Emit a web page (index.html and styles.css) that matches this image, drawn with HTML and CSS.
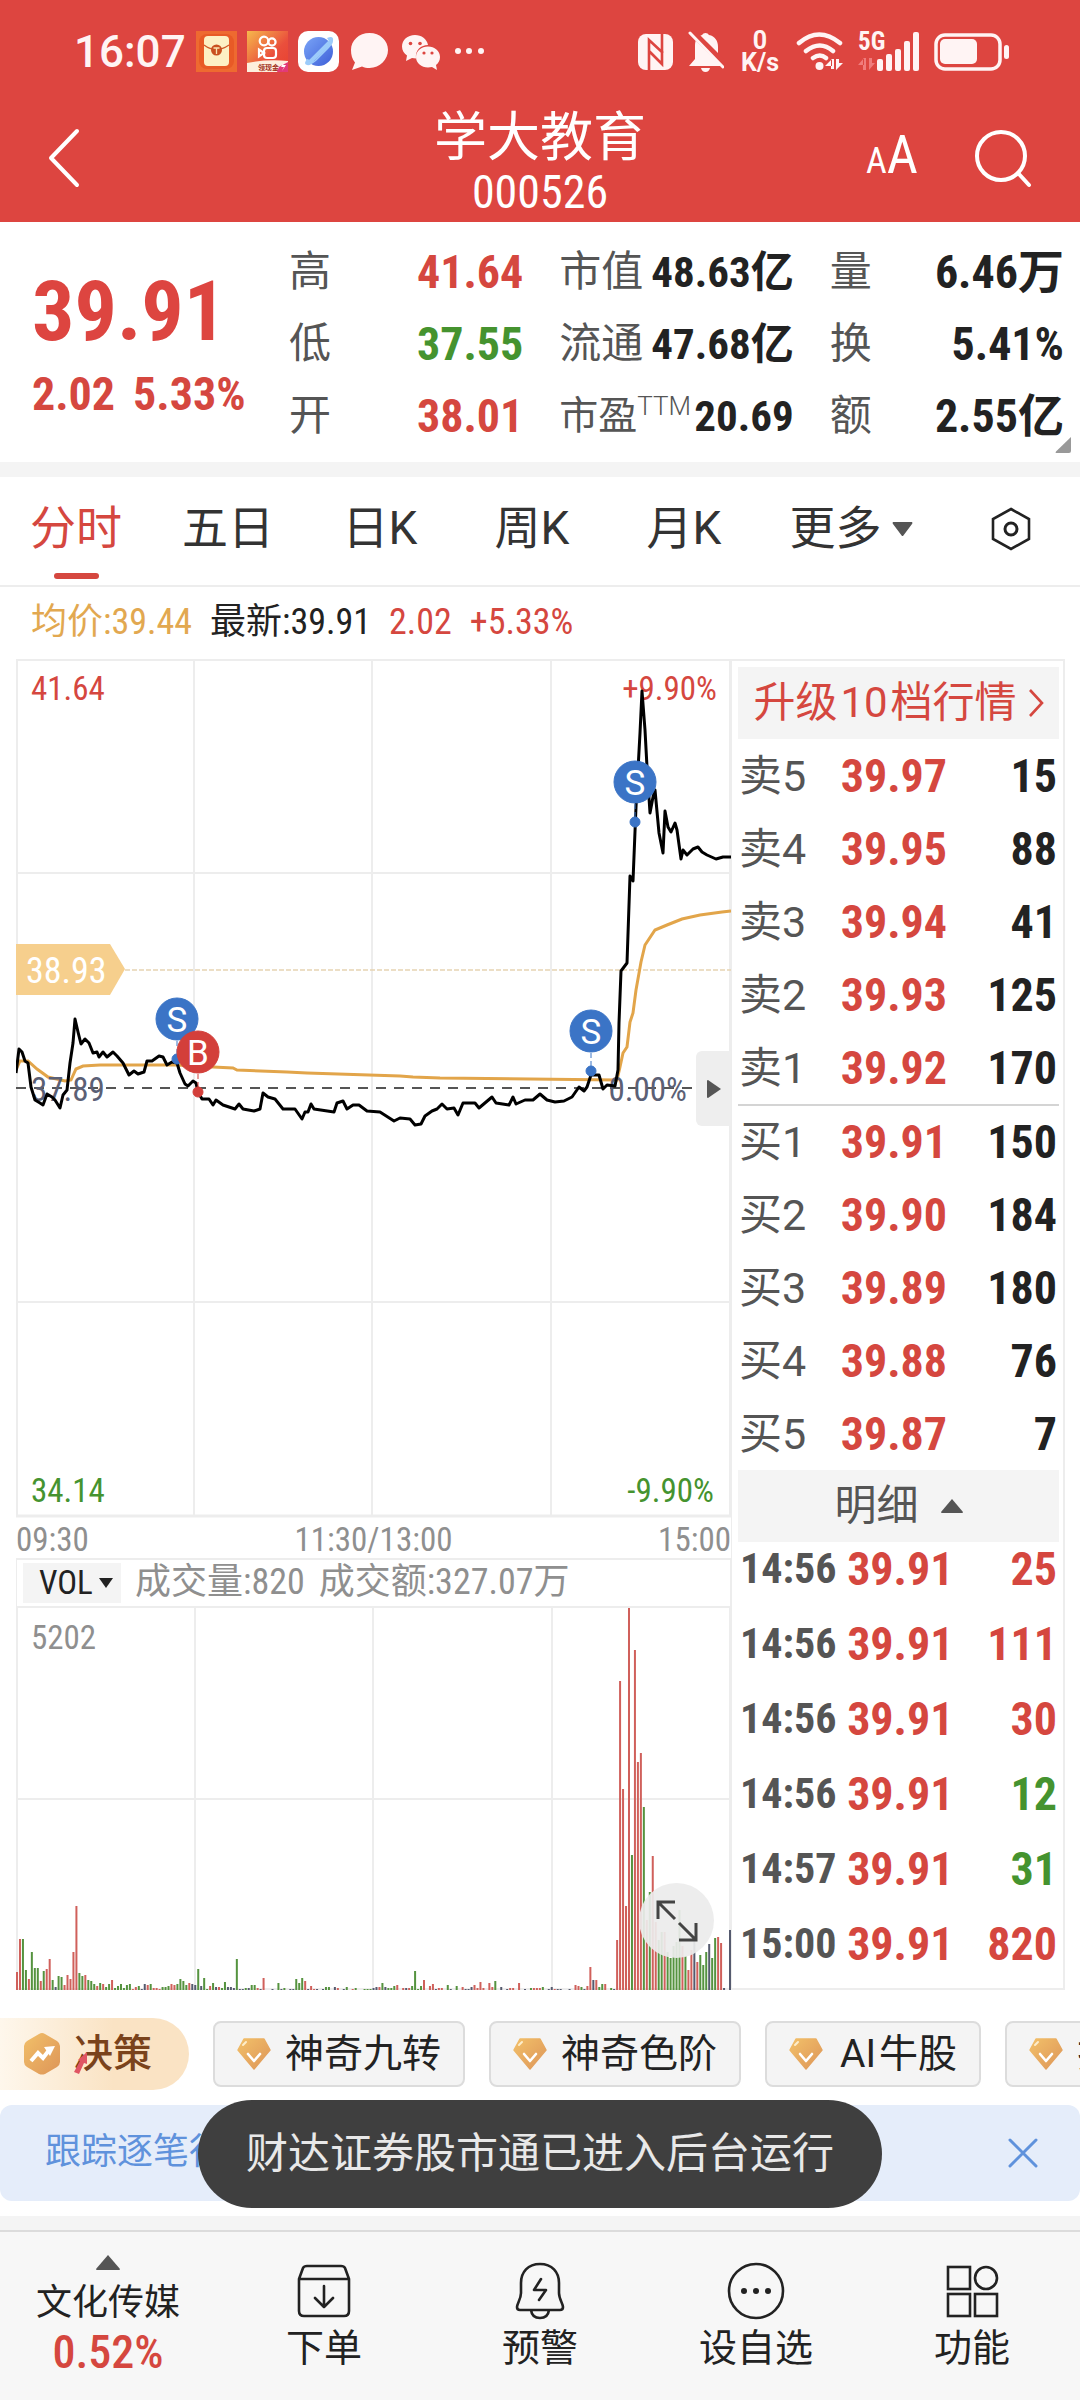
FILE: index.html
```html
<!DOCTYPE html>
<html lang="zh-CN">
<head>
    <meta charset="UTF-8">
    <meta name="viewport" content="width=device-width, initial-scale=1.0">
    <title>学大教育 000526</title>
    <link rel="stylesheet" href="styles.css">
</head>
<body>
    <!-- Shared icons -->
    <svg class="defs" aria-hidden="true">
        <defs>
            <linearGradient id="gold" x1="0" y1="0" x2="1" y2="1">
                <stop offset="0" stop-color="#f2c069"/>
                <stop offset="1" stop-color="#dd9558"/>
            </linearGradient>
            <linearGradient id="pay" x1="0" y1="0" x2="1" y2="1">
                <stop offset="0" stop-color="#f6b94c"/>
                <stop offset="0.6" stop-color="#ea4f3c"/>
                <stop offset="1" stop-color="#e8402f"/>
            </linearGradient>
            <linearGradient id="planet" x1="0" y1="0" x2="1" y2="1">
                <stop offset="0" stop-color="#7aa4f7"/>
                <stop offset="1" stop-color="#3d5fd8"/>
            </linearGradient>
            <symbol id="gem" viewBox="0 0 34 32">
                <path d="M7 1h20l6 11-16 19L1 12z" fill="url(#gold)" stroke="url(#gold)" stroke-width="1.5" stroke-linejoin="round"/>
                <path d="M11 16l6 7 6-7" fill="none" stroke="#fff" stroke-width="2.6" stroke-linecap="round" stroke-linejoin="round"/>
                <path d="M6 7l3-3" stroke="#fdeecb" stroke-width="2" stroke-linecap="round"/>
            </symbol>
        </defs>
    </svg>

    <header class="top">
        <div class="status-bar">
            <div class="status-left">
                <span class="clock">16:07</span>
                <svg width="41" height="41" viewBox="0 0 41 41">
                    <rect width="41" height="41" fill="#ee6a30"/>
                    <rect x="3" y="3" width="35" height="35" rx="8" fill="#e85a26"/>
                    <rect x="8" y="5" width="25" height="30" rx="4" fill="#fdf0c4"/>
                    <path d="M8 14q12 9 25 0" fill="none" stroke="#cf5a28" stroke-width="1.4"/>
                    <circle cx="20.5" cy="19" r="5.5" fill="#c9501f"/>
                    <path d="M17.5 17h6M20.5 17v6" stroke="#fbe3b0" stroke-width="1.3"/>
                </svg>
                <svg width="41" height="41" viewBox="0 0 41 41">
                    <rect width="41" height="41" fill="url(#pay)"/>
                    <g fill="none" stroke="#fff" stroke-width="2.2">
                        <circle cx="17" cy="10" r="4.3"/>
                        <circle cx="25" cy="11" r="3.6"/>
                        <rect x="17" y="17" width="12" height="10" rx="3"/>
                        <path d="M17 22l-5-3.5v7z"/>
                    </g>
                    <path d="M0 32q20-4 41-2v11H0z" fill="#fdeedd"/>
                    <text class="app-tag" x="11" y="39">领现金</text>
                    <path d="M32 36l9-5v10h-11z" fill="#e23a78"/>
                    <path d="M37 31l-3 5h3l-2 4 4-6h-3z" fill="#fff"/>
                </svg>
                <svg width="41" height="41" viewBox="0 0 41 41">
                    <rect width="41" height="41" rx="10" fill="#fff"/>
                    <circle cx="20.5" cy="20.5" r="14.5" fill="url(#planet)"/>
                    <path d="M9 34q-4-1 0-6l3 1q-2 3 4 1L32 13q2-4-1-3l-2-3q7-3 6 3 0 3-4 7L18 30q-6 5-9 4z" fill="#9ccbfa"/>
                    <path d="M13 30L32 11" stroke="#9ccbfa" stroke-width="4" stroke-linecap="round"/>
                </svg>
                <svg width="41" height="41" viewBox="0 0 41 41" fill="#fff4f4">
                    <path d="M20.5 2C31 2 39 9.5 39 19S31 37 20.5 37c-3 0-5-.5-7.5-1.500L3 39l3-7.500C3 28 2 24 2 19 2 9.5 10 2 20.5 2z"/>
                </svg>
                <svg width="41" height="41" viewBox="0 0 41 41" fill="#fff4f4">
                    <path d="M15 4C7.5 4 2 9 2 15.5c0 4 2 7 5 9L6 30l6-3 4 .5C15 19 21 14 28 14 27 8 21.5 4 15 4z"/>
                    <path d="M28 15.5c-6.5 0-12 4.5-12 10.500s5.500 10.500 12 10.500l4-.5 5 3-1-5c2.500-2 4-4.500 4-8 0-6-5.500-10.500-12-10.500z"/>
                    <g fill="#dd4540"><circle cx="10.5" cy="12.5" r="1.8"/><circle cx="20" cy="12.5" r="1.8"/><circle cx="24" cy="22" r="1.6"/><circle cx="32" cy="22" r="1.6"/></g>
                </svg>
                <svg width="41" height="41" viewBox="0 0 41 41" fill="#fff4f4">
                    <circle cx="7" cy="20" r="3"/><circle cx="18" cy="20" r="3"/><circle cx="30" cy="20" r="3"/>
                </svg>
            </div>
            <div class="status-right">
                <svg width="36" height="36" viewBox="0 0 36 36">
                    <rect width="35" height="36" rx="8" fill="#fff4f4"/>
                    <path d="M11 38V6l14 13M24 -2v32L11 17" fill="none" stroke="#dd4540" stroke-width="2.6"/>
                </svg>
                <svg width="36" height="42" viewBox="0 0 36 42">
                    <path d="M14 4a4 4 0 0 1 7 0c6 1 9 6 9 12v9l5 10H1l6-7V15c0-6 2-9 7-11z" fill="#fff4f4"/>
                    <path d="M13 37h9q-1 4-4.500 4T13 37z" fill="#fff4f4"/>
                    <path d="M3 0l34 34" stroke="#dd4540" stroke-width="7"/>
                    <path d="M2 2l33 34" stroke="#fff4f4" stroke-width="3" stroke-linecap="round"/>
                </svg>
                <span class="net-speed"><b>0</b><b>K/s</b></span>
                <svg width="48" height="40" viewBox="0 0 48 40">
                    <g fill="none" stroke="#fff4f4" stroke-width="4.5" stroke-linecap="round">
                        <path d="M3 11q20-17 41 0M10 19q14-11 27 0M17 26q7-5 13 0"/>
                    </g>
                    <circle cx="23.5" cy="34" r="4" fill="#fff4f4"/>
                    <path d="M35 27v10h3V27zM29 34l7-7v7zM40 27v11l7-7h-4v-4z" fill="#fff4f4"/>
                </svg>
                <div class="signal">
                    <b>5G</b>
                    <svg width="62" height="40" viewBox="0 0 62 40">
                        <path d="M5 26v12h3V26zM0 33l6-7v7zM11 26v12l6-7h-3v-5z" fill="#f07c7c"/>
                        <g fill="#fff4f4">
                            <rect x="19" y="27" width="6" height="12" rx="2"/>
                            <rect x="28" y="22" width="6" height="17" rx="2"/>
                            <rect x="37" y="17" width="6" height="22" rx="2"/>
                            <rect x="46" y="9" width="6" height="30" rx="2"/>
                            <rect x="55" y="0" width="6" height="39" rx="2"/>
                        </g>
                    </svg>
                </div>
                <svg width="76" height="38" viewBox="0 0 76 38">
                    <rect x="2" y="2" width="64" height="34" rx="9" fill="none" stroke="#fff4f4" stroke-width="3.5"/>
                    <rect x="6" y="6" width="37" height="25" rx="5" fill="#fff4f4"/>
                    <rect x="70" y="12" width="5" height="14" rx="2.5" fill="#fff4f4"/>
                </svg>
            </div>
        </div>
        <div class="title-bar">
            <button class="icon-btn" aria-label="返回">
                <svg width="32" height="60" viewBox="0 0 32 60"><path d="M29 3L3 30l26 27" fill="none" stroke="#fff" stroke-width="4" stroke-linecap="round" stroke-linejoin="round"/></svg>
            </button>
            <div class="title">
                <h1>学大教育</h1>
                <p>000526</p>
            </div>
            <div class="title-actions">
                <button class="font-btn" aria-label="字体大小"><small>A</small>A</button>
                <button class="icon-btn" aria-label="搜索">
                    <svg width="58" height="60" viewBox="0 0 58 60" fill="none" stroke="#fff" stroke-width="4" stroke-linecap="round"><circle cx="27" cy="28" r="24"/><path d="M44 45l11 12"/></svg>
                </button>
            </div>
        </div>
    </header>

    <section class="quote">
        <div class="quote-main">
            <div class="price">39.91</div>
            <div class="change"><span>2.02</span><span>5.33%</span></div>
        </div>
        <dl class="stats">
            <div><dt>高</dt><dd class="up">41.64</dd></div>
            <div class="tight"><dt>市值</dt><dd>48.63亿</dd></div>
            <div><dt>量</dt><dd>6.46万</dd></div>
            <div><dt>低</dt><dd class="down">37.55</dd></div>
            <div class="tight"><dt>流通</dt><dd>47.68亿</dd></div>
            <div><dt>换</dt><dd>5.41%</dd></div>
            <div><dt>开</dt><dd class="up">38.01</dd></div>
            <div class="tight"><dt>市盈<sup>TTM</sup></dt><dd>20.69</dd></div>
            <div><dt>额</dt><dd>2.55亿</dd></div>
        </dl>
        <svg class="corner" width="16" height="16" viewBox="0 0 16 16"><path d="M16 0v14q0 2-2 2H1q-1 0 0-1.500z" fill="#999"/></svg>
    </section>

    <nav class="tabs">
        <button class="tab active">分时</button>
        <button class="tab">五日</button>
        <button class="tab">日K</button>
        <button class="tab">周K</button>
        <button class="tab">月K</button>
        <button class="tab" aria-haspopup="true">更多<svg width="21" height="15" viewBox="0 0 21 15"><path d="M1 0h19q1 1 0 2l-9 12h-1L1 2q-1-1 0-2z" fill="#555"/></svg></button>
        <button class="tab" aria-label="设置">
            <svg width="40" height="44" viewBox="0 0 40 44" fill="none" stroke="#222"><path d="M20 2l18 10v20L20 42 2 32V12z" stroke-width="2.6"/><circle cx="20" cy="22" r="6" stroke-width="3"/></svg>
        </button>
    </nav>

    <div class="legend">
        <span class="avg">均价:39.44</span>
        <span>最新:39.91</span>
        <span class="up">2.02</span>
        <span class="up">+5.33%</span>
    </div>

    <main class="board">
        <div class="charts">
            <svg class="chart" viewBox="0 0 715 859">
                <g class="grid">
                    <path d="M1 1v856M178 1v856M356 1v856M535 1v856M714 1v856M0 1h715M0 214h715M0 643h715"/>
                    <path d="M0 857h715" stroke-width="3"/>
                </g>
                <path class="hold-line" d="M109 311h606"/>
                <path class="zero-line" d="M0 429h715"/>
                <polyline class="avg-line" points="0,411 4,402 12,402 21,410 32,418 49,422 55,421 60,410 67,407 84,406 161,406 197,408 217,409 221,411 271,413 291,414 384,417 397,418 424,419 601,421 604,408 607,394 611,388 614,363 617,354 620,331 625,303 629,286 639,271 651,266 666,260 684,256 706,253 715,252"/>
                <text class="label muted" x="15" y="442">37.89</text>
                <text class="label muted end" x="671" y="442">0.00%</text>
                <text class="label up" x="15" y="41">41.64</text>
                <text class="label up end" x="701" y="41">+9.90%</text>
                <text class="label down" x="15" y="843">34.14</text>
                <text class="label down end" x="698" y="843">-9.90%</text>
                <polyline class="price-line" points="0,414 3,390 6,393 9,402 12,404 15,428 19,441 24,444 27,446 31,435 36,438 39,441 44,449 47,436 51,431 54,404 57,384 59,360 62,373 65,385 69,380 73,384 77,394 81,393 83,398 87,393 91,398 97,393 101,397 107,404 113,416 118,412 122,415 128,413 131,402 136,402 143,397 147,398 151,406 156,403 161,404 164,414 169,425 172,427 177,422 180,424 182,433 186,440 193,440 197,446 200,441 207,446 219,450 223,445 227,450 238,452 244,450 247,434 252,438 259,440 267,450 279,450 286,460 289,453 292,453 295,445 298,450 318,453 321,444 327,442 331,450 337,446 343,446 351,452 364,453 378,462 384,459 394,460 399,466 405,465 409,457 416,452 421,450 426,445 431,450 438,449 442,456 447,444 459,444 463,449 476,438 480,444 493,446 497,438 500,445 509,441 517,441 524,435 531,441 539,443 548,442 556,438 563,428 568,432 571,428 575,416 583,416 587,430 591,426 599,427 602,411 603,364 605,312 611,304 614,217 617,222 620,148 624,74 626,32 629,71 631,108 634,154 637,138 639,131 643,174 647,194 649,152 652,168 655,173 659,164 661,171 665,200 667,191 671,196 677,190 682,188 686,193 691,196 700,200 707,198 715,198"/>
                <path d="M0 285h94l15 25-15 26H0z" fill="#f6cf8d"/>
                <text class="label tag" x="10" y="324">38.93</text>
                <g class="sell">
                    <path d="M161 382v14M575 394v14M619 145v14"/>
                    <circle cx="161" cy="400" r="5"/><circle cx="161" cy="360" r="21"/>
                    <circle cx="575" cy="412" r="5"/><circle cx="575" cy="372" r="21"/>
                    <circle cx="619" cy="163" r="5"/><circle cx="619" cy="123" r="21"/>
                </g>
                <g class="buy">
                    <path d="M182 415v14"/>
                    <circle cx="182" cy="433" r="5"/><circle cx="182" cy="393" r="21"/>
                </g>
                <g class="mark">
                    <text x="161" y="373">S</text>
                    <text x="575" y="385">S</text>
                    <text x="619" y="136">S</text>
                    <text x="182" y="406">B</text>
                </g>
            </svg>
            <button class="fold" aria-label="收起盘口">
                <svg width="14" height="18" viewBox="0 0 14 18"><path d="M0 1q0-1 1-1l13 9-13 9q-1 0-1-1z" fill="#555"/></svg>
            </button>
            <div class="axis"><span>09:30</span><span>11:30/13:00</span><span>15:00</span></div>
            <div class="vol-head">
                <label class="vol-pick">
                    <select aria-label="指标"><option>VOL</option></select>
                    <svg width="14" height="10" viewBox="0 0 14 10"><path d="M0 0h14L7 10z" fill="#222"/></svg>
                </label>
                <span>成交量:820</span>
                <span>成交额:327.07万</span>
            </div>
            <svg class="volume" viewBox="0 0 715 382">
                <path class="grid" d="M1 0v382M179 0v382M357 0v382M536 0v382M714 0v382M0 191h715M0 381h715"/>
                <text class="label axis-max" x="15" y="41">5202</text>
                <g id="bars"></g>
            </svg>
            <button class="expand" aria-label="全屏">
                <svg width="42" height="42" viewBox="0 0 42 42" fill="none" stroke="#444" stroke-width="3"><path d="M2 19V2h17M2 2l17 17M40 23v17H23M40 40L23 23"/></svg>
            </button>
        </div>

        <aside class="depth">
            <button class="upgrade"><span>升级<span class="latin">10</span>档行情</span><svg width="15" height="28" viewBox="0 0 15 28"><path d="M1 1l12 13L1 27" fill="none" stroke="#d5473f" stroke-width="2.6"/></svg></button>
            <table class="orders">
                <tbody>
                    <tr><th scope="row">卖5</th><td class="up">39.97</td><td>15</td></tr>
                    <tr><th scope="row">卖4</th><td class="up">39.95</td><td>88</td></tr>
                    <tr><th scope="row">卖3</th><td class="up">39.94</td><td>41</td></tr>
                    <tr><th scope="row">卖2</th><td class="up">39.93</td><td>125</td></tr>
                    <tr><th scope="row">卖1</th><td class="up">39.92</td><td>170</td></tr>
                </tbody>
            </table>
            <table class="orders bids">
                <tbody>
                    <tr><th scope="row">买1</th><td class="up">39.91</td><td>150</td></tr>
                    <tr><th scope="row">买2</th><td class="up">39.90</td><td>184</td></tr>
                    <tr><th scope="row">买3</th><td class="up">39.89</td><td>180</td></tr>
                    <tr><th scope="row">买4</th><td class="up">39.88</td><td>76</td></tr>
                    <tr><th scope="row">买5</th><td class="up">39.87</td><td>7</td></tr>
                </tbody>
            </table>
            <button class="detail">明细<svg width="22" height="14" viewBox="0 0 22 14"><path d="M11 0l11 13q0 1-1 1H1q-1 0-1-1z" fill="#555"/></svg></button>
            <table class="ticks">
                <tbody>
                    <tr><th scope="row">14:56</th><td class="up">39.91</td><td class="up">25</td></tr>
                    <tr><th scope="row">14:56</th><td class="up">39.91</td><td class="up">111</td></tr>
                    <tr><th scope="row">14:56</th><td class="up">39.91</td><td class="up">30</td></tr>
                    <tr><th scope="row">14:56</th><td class="up">39.91</td><td class="down">12</td></tr>
                    <tr><th scope="row">14:57</th><td class="up">39.91</td><td class="down">31</td></tr>
                    <tr><th scope="row">15:00</th><td class="up">39.91</td><td class="up">820</td></tr>
                </tbody>
            </table>
        </aside>
    </main>

    <div class="tools">
        <button class="decision">
            <svg width="36" height="42" viewBox="0 0 36 42"><path d="M15 1q3-2 6 0l12 7q3 2 3 5v16q0 3-3 5l-12 7q-3 1-6 0L3 34q-3-2-3-5V13q0-3 3-5z" fill="url(#gold)"/><path d="M7 28l7-8 5 5 7-9" fill="none" stroke="#fff" stroke-width="4"/><path d="M20 14l11-1-5 10z" fill="#fff"/></svg>
            <span>决策<svg class="boost" width="14" height="22" viewBox="0 0 14 22"><path d="M13 0L4 8l2 1-6 11 5 2 5-11 3 1z" fill="#e05563"/></svg></span>
        </button>
        <button class="chip"><svg width="34" height="32"><use href="#gem"/></svg>神奇九转</button>
        <button class="chip"><svg width="34" height="32"><use href="#gem"/></svg>神奇色阶</button>
        <button class="chip"><svg width="34" height="32"><use href="#gem"/></svg><span><span class="latin">AI</span>牛股</span></button>
        <button class="chip"><svg width="34" height="32"><use href="#gem"/></svg>抢筹先锋</button>
    </div>

    <div class="banner">
        <a href="#">跟踪逐笔行情</a>
        <button class="icon-btn" aria-label="关闭">
            <svg width="30" height="30" viewBox="0 0 30 30"><path d="M2 2l26 26M28 2L2 28" stroke="#5f92dc" stroke-width="3" stroke-linecap="round"/></svg>
        </button>
    </div>

    <footer class="bottom-nav">
        <button class="nav-item sector">
            <svg width="24" height="15" viewBox="0 0 24 15"><path d="M12 0l12 14q0 1-1 1H1q-1 0-1-1z" fill="#555"/></svg>
            <span>文化传媒</span>
            <b>0.52%</b>
        </button>
        <button class="nav-item">
            <svg width="58" height="58" viewBox="0 0 58 58" fill="none" stroke="#222" stroke-width="2.6" stroke-linecap="round" stroke-linejoin="round"><path d="M4 17L8 6q1-2 4-2h34q3 0 4 2l4 11v32q0 5-5 5H9q-5 0-5-5zM4 17h50M29 24v21M20 36l9 9 9-9"/></svg>
            下单
        </button>
        <button class="nav-item">
            <svg width="58" height="58" viewBox="0 0 58 58" fill="none" stroke="#222" stroke-width="2.6" stroke-linecap="round" stroke-linejoin="round"><path d="M29 2C17 2 10 10 10 21v10c0 6-4 11-4 14q0 3 3 3h40q3 0 3-3c0-3-4-8-4-14V21C48 10 41 2 29 2zM20 48q1 8 9 8t9-8"/><path d="M30 17l-7 11h12l-7 10"/></svg>
            预警
        </button>
        <button class="nav-item">
            <svg width="58" height="58" viewBox="0 0 58 58" fill="#222"><circle cx="29" cy="29" r="27" fill="none" stroke="#222" stroke-width="2.6"/><circle cx="17" cy="29" r="3"/><circle cx="29" cy="29" r="3"/><circle cx="41" cy="29" r="3"/></svg>
            设自选
        </button>
        <button class="nav-item">
            <svg width="58" height="58" viewBox="0 0 58 58" fill="none" stroke="#222" stroke-width="2.6"><rect x="5" y="5" width="22" height="22"/><circle cx="43" cy="16" r="11"/><rect x="5" y="32" width="22" height="22"/><rect x="32" y="32" width="22" height="22"/></svg>
            功能
        </button>
    </footer>

    <div class="toast" role="status">财达证券股市通已进入后台运行</div>

    <script src="volume.js"></script>
</body>
</html>
```
FILE: styles.css
```css
* {
    margin: 0;
    padding: 0;
    box-sizing: border-box;
}

:root {
    --red: #d5473f;
    --green: #45932f;
    --num: "Liberation Sans Narrow", "Roboto Condensed", Roboto, "Noto Sans CJK SC", sans-serif;
}

body {
    background: #fff;
    color: #222;
    font-family: Roboto, "Noto Sans CJK SC", sans-serif;
    line-height: 1.2;
    overflow-x: hidden;
}

button,
select {
    border: 0;
    background: none;
    font: inherit;
    color: inherit;
    cursor: pointer;
}

svg {
    display: block;
    flex: none;
}

.defs {
    position: absolute;
    width: 0;
    height: 0;
}

.up {
    color: var(--red);
    fill: var(--red);
}

.down {
    color: var(--green);
    fill: var(--green);
}

.latin {
    margin: 0 3px;
}

/* Header */
.top {
    background: #dd4540;
    color: #fff;
    height: 222px;
}

.status-bar {
    display: flex;
    justify-content: space-between;
    align-items: center;
    height: 100px;
    padding: 3px 70px 0 74px;
    color: #fff4f4;
}

.status-left {
    display: flex;
    align-items: center;
    gap: 10px;
}

.clock {
    font-size: 44px;
    line-height: 48px;
    font-weight: 500;
}

.app-tag {
    font-size: 7px;
    font-weight: 700;
    fill: #a03020;
}

.status-right {
    display: flex;
    align-items: center;
    gap: 14px;
}

.net-speed {
    display: flex;
    flex-direction: column;
    align-items: center;
    font-size: 25px;
    line-height: 22px;
    padding: 0 3px;
}

.signal {
    position: relative;
}

.signal b {
    position: absolute;
    left: 0;
    top: 0;
    font-family: var(--num);
    font-size: 25px;
    line-height: 20px;
}

.title-bar {
    display: grid;
    grid-template-columns: 1fr auto 1fr;
    align-items: center;
    padding: 0 48px;
}

.icon-btn {
    display: flex;
}

.title {
    padding-top: 8px;
    text-align: center;
}

.title h1 {
    font-size: 53px;
    line-height: 60px;
    font-weight: 400;
}

.title p {
    font-family: var(--num);
    font-size: 46px;
    line-height: 48px;
}

.title-actions {
    display: flex;
    justify-content: flex-end;
    align-items: center;
    gap: 56px;
}

.font-btn {
    font-family: var(--num);
    font-size: 54px;
    line-height: 60px;
}

.font-btn small {
    font-size: 36px;
}

/* Quote */
.quote {
    display: grid;
    grid-template-columns: 257px 1fr;
    position: relative;
    padding: 14px 16px 10px 32px;
    border-bottom: 15px solid #f4f4f4;
}

.quote-main {
    color: var(--red);
    font-family: var(--num);
    font-weight: 700;
    padding-top: 30px;
}

.price {
    font-size: 84px;
    line-height: 92px;
    color: #dd4540;
}

.change {
    display: flex;
    gap: 18px;
    font-size: 46px;
    line-height: 72px;
}

.stats {
    display: grid;
    grid-template-columns: repeat(3, 1fr);
    column-gap: 36px;
}

.stats div {
    display: flex;
    justify-content: space-between;
    align-items: center;
    height: 72px;
    white-space: nowrap;
}

.stats dt {
    font-size: 42px;
    line-height: 60px;
    color: #555;
}

.stats dd {
    font-family: var(--num);
    font-size: 46px;
    line-height: 60px;
    font-weight: 700;
}

.stats .tight dd {
    font-size: 43px;
}

.stats sup {
    font-size: 26px;
    line-height: 26px;
    vertical-align: 14px;
    font-weight: 300;
}

.stats dt:has(sup) {
    font-size: 39px;
}

.corner {
    position: absolute;
    right: 9px;
    bottom: 9px;
}

/* Period tabs */
.tabs {
    display: grid;
    grid-template-columns: repeat(5, 152fr) 182fr 138fr;
    height: 110px;
    border-bottom: 2px solid #ededed;
}

.tab {
    position: relative;
    display: flex;
    align-items: center;
    justify-content: center;
    gap: 10px;
    padding-bottom: 4px;
    font-size: 46px;
    color: #333;
}

.tab.active {
    color: var(--red);
}

.tab.active::after {
    content: '';
    position: absolute;
    left: calc(50% - 22px);
    bottom: 6px;
    width: 45px;
    height: 6px;
    border-radius: 3px;
    background: var(--red);
}

.legend {
    display: flex;
    align-items: center;
    gap: 18px;
    height: 72px;
    padding: 0 31px;
    font-family: var(--num);
    font-size: 36px;
}

.avg {
    color: #e2a850;
}

/* Charts */
.board {
    display: grid;
    grid-template-columns: 715fr 334fr;
    padding: 0 15px 0 16px;
}

.charts {
    position: relative;
}

.chart,
.volume {
    width: 100%;
    height: auto;
}

.grid {
    fill: none;
    stroke: #ededed;
    stroke-width: 2;
}

.hold-line {
    stroke: #e6d3b3;
    stroke-width: 1.5;
    stroke-dasharray: 5 2;
}

.zero-line {
    stroke: #555;
    stroke-width: 2;
    stroke-dasharray: 10 8;
}

.avg-line {
    fill: none;
    stroke: #e2a54a;
    stroke-width: 3;
}

.price-line {
    fill: none;
    stroke: #000;
    stroke-width: 3;
    stroke-linejoin: round;
}

.label {
    font-family: var(--num);
    font-size: 33px;
}

.end {
    text-anchor: end;
}

.muted {
    fill: #5b6075;
}

.tag {
    font-size: 36px;
    fill: #fff;
}

.sell {
    fill: #3b74c6;
    stroke: #3b74c6;
}

.buy {
    fill: #d33f3a;
    stroke: #d33f3a;
}

.sell path,
.buy path {
    stroke-dasharray: 5 3;
}

.mark {
    font-family: Roboto, sans-serif;
    font-size: 35px;
    fill: #fff;
    text-anchor: middle;
}

.fold {
    position: absolute;
    right: 0;
    top: 392px;
    width: 35px;
    height: 75px;
    display: flex;
    align-items: center;
    justify-content: center;
    border-radius: 6px 0 0 6px;
    background: #eee;
}

.axis {
    display: flex;
    justify-content: space-between;
    padding-top: 3px;
    font-family: var(--num);
    font-size: 33px;
    line-height: 37px;
    color: #8f8f8f;
}

.vol-head {
    display: flex;
    align-items: center;
    gap: 14px;
    height: 50px;
    padding: 0 6px;
    border: 2px solid #ededed;
    border-width: 2px 1px;
    font-family: var(--num);
    font-size: 36px;
    color: #8f8f8f;
    white-space: nowrap;
}

.vol-pick {
    display: flex;
    align-items: center;
    gap: 6px;
    height: 40px;
    padding: 0 8px 0 16px;
    background: #f4f4f4;
    color: #222;
}

.vol-pick select {
    appearance: none;
    font-size: 33px;
    line-height: 40px;
}

.axis-max {
    fill: #8f8f8f;
}

.bar-r {
    fill: #d0605b;
}

.bar-g {
    fill: #55933f;
}

.bar-b {
    fill: #555a6e;
}

.expand {
    position: absolute;
    right: 17px;
    bottom: 32px;
    width: 75px;
    height: 75px;
    display: flex;
    align-items: center;
    justify-content: center;
    border-radius: 50%;
    background: rgba(236, 236, 236, 0.92);
}

/* Order book */
.depth {
    padding: 6px 4px 0 6px;
    border: 2px solid #ededed;
    border-left-width: 1px;
}

.upgrade,
.detail {
    display: flex;
    align-items: center;
    justify-content: center;
    width: 100%;
    height: 72px;
    background: #f4f4f4;
    font-size: 42px;
    white-space: nowrap;
}

.upgrade {
    gap: 12px;
    color: var(--red);
}

.detail {
    gap: 22px;
    color: #555;
}

.orders,
.ticks {
    width: 100%;
    border-collapse: collapse;
    font-family: var(--num);
    font-size: 46px;
    font-weight: 700;
}

.bids {
    border-top: 2px solid #d4d4d4;
}

.orders th,
.orders td {
    height: 73px;
    line-height: 60px;
    vertical-align: middle;
}

.orders th {
    width: 32%;
    font-family: Roboto, "Noto Sans CJK SC", sans-serif;
    font-size: 43px;
    font-weight: 400;
    color: #555;
    text-align: left;
    padding-left: 1px;
}

.orders td:last-child,
.ticks td:last-child {
    text-align: right;
    padding-right: 2px;
}

.ticks th {
    width: 34%;
    font-size: 42px;
    color: #555;
    text-align: left;
    padding-left: 2px;
}

.ticks th,
.ticks td {
    line-height: 54px;
    padding-bottom: 21px;
}

.ticks tr:last-child th,
.ticks tr:last-child td {
    padding-bottom: 0;
}

/* Tool chips */
.tools {
    display: flex;
    align-items: center;
    gap: 24px;
    margin-top: 28px;
    overflow: hidden;
    white-space: nowrap;
}

.decision {
    display: flex;
    align-items: center;
    flex: none;
    gap: 14px;
    height: 72px;
    padding: 0 37px 0 24px;
    border-radius: 0 36px 36px 0;
    background: linear-gradient(90deg, #fef7ec, #fae3c4 60%);
    color: #7a431c;
    font-size: 39px;
    font-weight: 500;
}

.decision span {
    position: relative;
}

.boost {
    position: absolute;
    left: 0;
    bottom: 3px;
}

.chip {
    display: flex;
    align-items: center;
    flex: none;
    gap: 14px;
    height: 66px;
    padding: 0 22px;
    border: 2px solid #dcdcdc;
    border-radius: 8px;
    background: #f4f4f4;
    font-size: 39px;
}

.banner {
    display: flex;
    align-items: center;
    justify-content: space-between;
    height: 96px;
    margin: 15px 0;
    padding: 0 42px 0 45px;
    border-radius: 12px;
    background: #e5edfa;
    font-size: 36px;
}

.banner a {
    color: #5f92dc;
    text-decoration: none;
}

/* Bottom navigation */
.bottom-nav {
    display: grid;
    grid-template-columns: repeat(5, 1fr);
    height: 184px;
    border-top: 14px solid #f4f4f4;
    background: #f7f7f7;
    box-shadow: inset 0 2px #dcdcdc;
}

.nav-item {
    display: flex;
    flex-direction: column;
    align-items: center;
    padding-top: 32px;
    font-size: 38px;
    line-height: 56px;
}

.sector {
    padding-top: 25px;
    font-size: 36px;
}

.sector span {
    line-height: 48px;
    padding-top: 9px;
}

.sector b {
    font-family: var(--num);
    font-size: 46px;
    line-height: 50px;
    font-weight: 500;
    color: var(--red);
}

.toast {
    position: fixed;
    left: 50%;
    bottom: 192px;
    transform: translateX(-50%);
    padding: 0 48px;
    border-radius: 54px;
    background: #3f3f3f;
    color: #e8e8e8;
    font-size: 42px;
    line-height: 108px;
    white-space: nowrap;
}
```
FILE: volume.js
```javascript
// One entry per minute: colour (r up, g down, b flat) and bar height
const volumes = (
    'r18 r51 g51 g20 r11 g38 g22 g22 r9 g19 r21 r31 g10 b3 g14 g13 r5 r15 r11 r38 ' +
    'r84 g17 g14 r15 g10 g9 g6 r4 g7 r6 g3 g6 r10 g2 g4 g6 g2 g5 g6 r1 ' +
    'r3 g4 b1 b6 r5 g6 r2 r2 r1 g3 g3 g4 r6 r5 g6 g11 g9 g5 r7 b6 ' +
    'b5 g21 b4 g12 g1 r4 g7 b3 r3 g2 g8 b3 b3 b2 g31 b1 b1 g2 b2 g5 ' +
    'g5 r2 b1 r12 b0 b0 b1 b0 g7 b1 g2 b0 b1 b1 g11 g7 g12 r9 b1 r4 ' +
    'r1 b1 b0 b1 g3 g3 b0 b3 r2 b0 b1 g3 b0 r1 g2 b0 b0 g1 g1 g1 ' +
    'b2 b3 r3 g7 b3 g2 g2 g4 r5 b0 r2 b2 r2 g4 g19 g1 g4 r10 b0 r4 ' +
    'r6 b1 r2 r2 b0 g5 b1 b0 g4 b0 r3 b1 b1 b3 r5 r2 r8 r2 b0 r7 ' +
    'r3 g9 b0 b3 b0 b1 r2 r2 b0 r7 b0 b1 b0 g2 r2 r2 r2 g3 b0 b1 ' +
    'b3 r1 b1 b1 b0 b0 b1 b0 r5 r4 g3 b1 r4 r23 b10 r10 g3 g6 r6 b0 ' +
    'g2 b1 r50 r309 r201 r84 r382 g135 r340 r228 r237 g183 r70 g98 r134 r68 g50 g58 r58 g38 ' +
    'g32 g44 g48 g80 r44 g34 r20 r40 b50 r28 g35 g25 g38 b46 g32 g52 r53 r47 b2 b0 b60'
).split(' ');

const WIDTH = 715;
const HEIGHT = 382;
const step = (WIDTH - 2) / (volumes.length - 1);
const bars = document.getElementById('bars');

volumes.forEach((entry, i) => {
    const height = Number(entry.slice(1));
    const bar = document.createElementNS('http://www.w3.org/2000/svg', 'rect');
    bar.setAttribute('class', 'bar-' + entry[0]);
    bar.setAttribute('x', i * step);
    bar.setAttribute('y', HEIGHT - height);
    bar.setAttribute('width', 2);
    bar.setAttribute('height', height);
    bars.appendChild(bar);
});
```
